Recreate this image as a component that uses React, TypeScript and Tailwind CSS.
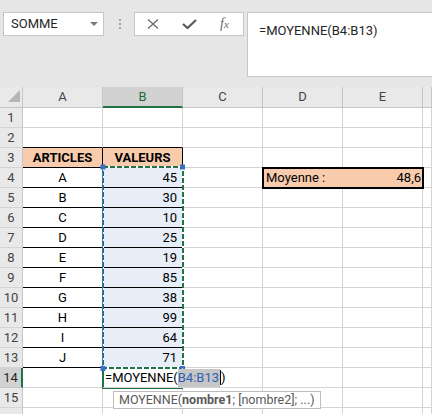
import React from "react";

const ITEMS: [string, number][] = [
  ["A", 45],
  ["B", 30],
  ["C", 10],
  ["D", 25],
  ["E", 19],
  ["F", 85],
  ["G", 38],
  ["H", 99],
  ["I", 64],
  ["J", 71],
];

const FONT = { fontFamily: "Roboto, 'Liberation Sans', sans-serif" };

// plain grid cell, gray lines right + bottom
const base = "h-[20px] flex items-center border-r border-b text-[13px] text-black overflow-visible";
const G = "border-r-[#d4d4d4] border-b-[#d4d4d4]";

function RowHead({ n, active }: { n?: number; active?: boolean }) {
  if (active) {
    return (
      <div className="h-[20px] flex items-center justify-center border-b border-b-[#c6c6c6] border-r-2 border-r-[#217346] bg-[#d2d2d2] text-[13px] text-[#262626]">
        {n}
      </div>
    );
  }
  return (
    <div className="h-[20px] flex items-center justify-center border-b border-r border-b-[#d4d4d4] border-r-[#c6c6c6] bg-[#e9e9e9] text-[13px] text-[#444]">
      {n}
    </div>
  );
}

function TopBar() {
  return (
    <div className="h-[87px] bg-[#e6e6e6] flex items-start pt-[12px]">
      {/* name box */}
      <div className="ml-[3px] w-[101px] h-[24px] bg-white border border-[#c6c6c6] flex items-center justify-between pl-[7px] pr-[5px]">
        <span className="text-[13px] text-[#262626]">SOMME</span>
        <span className="w-0 h-0 border-l-[4px] border-r-[4px] border-t-[4px] border-l-transparent border-r-transparent border-t-[#7a7a7a]" />
      </div>
      {/* grip dots */}
      <div className="ml-[15px] mt-[7px] flex flex-col gap-[2px]">
        <span className="w-[2px] h-[2px] bg-[#a6a6a6]" />
        <span className="w-[2px] h-[2px] bg-[#a6a6a6]" />
        <span className="w-[2px] h-[2px] bg-[#a6a6a6]" />
      </div>
      {/* cancel / enter / fx */}
      <div className="ml-[13px] w-[110px] h-[24px] bg-white border border-[#c6c6c6] flex items-center">
        <svg width="12" height="10" viewBox="0 0 12 10" className="ml-[12px]">
          <path d="M1 0.5 L11 9.5 M11 0.5 L1 9.5" stroke="#6b6b6b" strokeWidth="1.3" fill="none" />
        </svg>
        <svg width="15" height="10" viewBox="0 0 15 10" className="ml-[23px]">
          <path d="M1 5 L5.5 9 L14 1" stroke="#5a5a5a" strokeWidth="2.2" fill="none" />
        </svg>
        <span
          className="ml-[23px] text-[14px] italic text-[#6b6b6b] leading-none"
          style={{ fontFamily: "'Liberation Serif', serif" }}
        >
          f<span className="text-[11px]">x</span>
        </span>
      </div>
      {/* formula box */}
      <div className="ml-[3px] flex-1 h-[65px] bg-white border border-r-0 border-[#c6c6c6] pl-[11px] pt-[5px]">
        <span className="text-[13px] text-[#262626]">=MOYENNE(B4:B13)</span>
      </div>
    </div>
  );
}

function ColHeaders() {
  const cols = ["A", "B", "C", "D", "E", ""];
  return (
    <>
      <div className="h-[21px] relative border-r border-b border-r-[#c6c6c6] border-b-[#c6c6c6] bg-[#e9e9e9]">
        <svg width="14" height="14" viewBox="0 0 14 14" className="absolute left-[7px] top-[2px]">
          <path d="M13 1 L13 13 L1 13 Z" fill="#b5b5b5" />
        </svg>
      </div>
      {cols.map((c, i) =>
        c === "B" ? (
          <div
            key={i}
            className="h-[21px] flex items-center justify-center border-r border-r-[#c6c6c6] border-b-2 border-b-[#217346] bg-[#d2d2d2] text-[13px] text-[#1e6b41]"
          >
            {c}
          </div>
        ) : (
          <div
            key={i}
            className="h-[21px] flex items-center justify-center border-r border-b border-r-[#c6c6c6] border-b-[#c6c6c6] bg-[#e9e9e9] text-[13px] text-[#444]"
          >
            {c}
          </div>
        )
      )}
    </>
  );
}

function EmptyRow({ n, abBlack }: { n?: number; abBlack?: boolean }) {
  const ab = abBlack ? "border-r-[#d4d4d4] border-b-black" : G;
  return (
    <>
      <RowHead n={n} />
      <div className={`${base} ${ab}`} />
      <div className={`${base} ${ab}`} />
      <div className={`${base} ${G}`} />
      <div className={`${base} ${G}`} />
      <div className={`${base} ${G}`} />
      <div className={`${base} ${G}`} />
    </>
  );
}

export default function App() {
  return (
    <div className="w-[432px] h-[414px] overflow-hidden bg-white" style={FONT}>
      <TopBar />
      <div className="relative grid grid-cols-[23px_80px_80px_80px_80px_80px_1fr]">
        <ColHeaders />
        <EmptyRow n={1} />
        <EmptyRow n={2} abBlack />

        {/* row 3 : headers of the table */}
        <RowHead n={3} />
        <div className={`${base} border-r-black border-b-black bg-[#f8cbad] justify-center font-bold`}>ARTICLES</div>
        <div className={`${base} border-r-black border-b-black bg-[#f8cbad] justify-center font-bold`}>VALEURS</div>
        <div className={`${base} ${G}`} />
        <div className={`${base} ${G}`} />
        <div className={`${base} ${G}`} />
        <div className={`${base} ${G}`} />

        {ITEMS.map(([label, value], i) => (
          <React.Fragment key={label}>
            <RowHead n={i + 4} />
            <div className={`${base} border-r-black border-b-black justify-center`}>{label}</div>
            <div className={`${base} border-r-[#d4d4d4] border-b-black bg-[#e7eef8] justify-end pr-[5px]`}>{value}</div>
            <div className={`${base} ${G}`} />
            {i === 0 ? (
              <div className="col-span-2 h-[20px] relative z-10 bg-[#f8cbad] border-b border-b-[#d4d4d4]">
                <div className="absolute top-[-1px] left-[-1px] right-[-1px] bottom-[-2px] border-2 border-black flex items-center justify-between pl-[2px] pr-[1px] text-[13px] text-black">
                  <span>Moyenne :</span>
                  <span>48,6</span>
                </div>
              </div>
            ) : (
              <>
                <div className={`${base} ${G}`} />
                <div className={`${base} ${G}`} />
              </>
            )}
            <div className={`${base} ${G}`} />
          </React.Fragment>
        ))}

        {/* row 14 : active cell with formula being edited */}
        <RowHead n={14} active />
        <div className={`${base} ${G}`} />
        <div className={`${base} ${G} relative z-20`}>
          <span className="relative flex items-center h-[18px] pl-[2px] whitespace-nowrap text-[13px]">
            <span>=MOYENNE(</span>
            <span className="bg-[#c6c6c6] text-[#2f5fb3] h-full flex items-center pr-[1px]">B4:B13</span>
            <span className="w-px h-[15px] bg-black" />
            <span>)</span>
          </span>
        </div>
        <div className={`${base} ${G}`} />
        <div className={`${base} ${G}`} />
        <div className={`${base} ${G}`} />
        <div className={`${base} ${G}`} />

        <EmptyRow n={15} />
        <EmptyRow />

        {/* copy marquee around B4:B13 and active cell frame */}
        <svg
          width="96"
          height="240"
          viewBox="0 0 96 240"
          className="absolute left-[96px] top-[73px] z-10 pointer-events-none"
        >
          <rect x="7" y="7" width="80" height="201" fill="none" stroke="#ffffff" strokeWidth="2" />
          <rect x="7" y="7" width="80" height="201" fill="none" stroke="#217346" strokeWidth="2" strokeDasharray="5 2" />
          <line x1="6.5" y1="7" x2="6.5" y2="208" stroke="#3b6fc4" strokeWidth="1" />
          <path d="M7 209 L7 228 L87 228" fill="none" stroke="#217346" strokeWidth="2" />
          <rect x="4.5" y="4.5" width="5" height="5" fill="#3b6fc4" />
          <rect x="84" y="4.5" width="5" height="5" fill="#3b6fc4" />
          <rect x="4.5" y="206" width="5" height="5" fill="#3b6fc4" />
          <rect x="84" y="206" width="5" height="5" fill="#3b6fc4" />
        </svg>

        {/* function tooltip */}
        <div className="absolute left-[113px] top-[304px] z-30 h-[18px] px-[5px] flex items-center bg-white border border-[#bdbdbd] text-[12.5px] text-[#595959] whitespace-nowrap">
          MOYENNE(<b className="font-bold">nombre1</b>; [nombre2]; ...)
        </div>
      </div>
    </div>
  );
}
